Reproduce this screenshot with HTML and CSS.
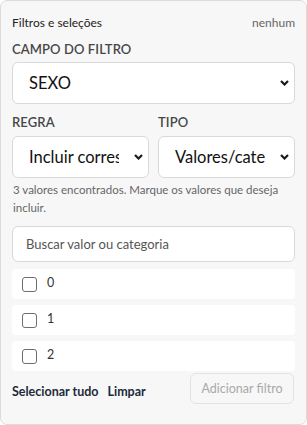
FILE: index.html
```html
<!DOCTYPE html>
<html lang="pt-BR">
<head>
<meta charset="utf-8">
<link rel="stylesheet" href="styles.css">
</head>
<body>
<div class="card">
  <div class="head">
    <span class="title">Filtros e seleções</span>
    <span class="status">nenhum</span>
  </div>
  <div class="field first">
    <div class="label">CAMPO DO FILTRO</div>
    <div class="select big"><span class="val">SEXO</span><svg class="chev" width="9" height="6" viewBox="0 0 9 6"><path d="M1 1 L4.5 4.5 L8 1" fill="none" stroke="#1a1a1a" stroke-width="2.2"/></svg></div>
  </div>
  <div class="row2">
    <div class="field">
      <div class="label">REGRA</div>
      <div class="select"><span class="val">Incluir correspondentes</span><svg class="chev" width="9" height="6" viewBox="0 0 9 6"><path d="M1 1 L4.5 4.5 L8 1" fill="none" stroke="#1a1a1a" stroke-width="2.2"/></svg></div>
    </div>
    <div class="field">
      <div class="label">TIPO</div>
      <div class="select"><span class="val">Valores/categorias</span><svg class="chev" width="9" height="6" viewBox="0 0 9 6"><path d="M1 1 L4.5 4.5 L8 1" fill="none" stroke="#1a1a1a" stroke-width="2.2"/></svg></div>
    </div>
  </div>
  <p class="hint">3 valores encontrados. Marque os valores que deseja incluir.</p>
  <div class="search">Buscar valor ou categoria</div>
  <div class="list">
    <div class="item"><span class="box"></span><span class="txt">0</span></div>
    <div class="item"><span class="box"></span><span class="txt">1</span></div>
    <div class="item"><span class="box"></span><span class="txt">2</span></div>
  </div>
  <div class="foot">
    <span class="link">Selecionar tudo</span>
    <span class="link">Limpar</span>
    <span class="btn">Adicionar filtro</span>
  </div>
</div>
</body>
</html>
```
FILE: styles.css
```css
html, body { margin: 0; padding: 0; }
body { font-family: "Lato", "Noto Sans", sans-serif; color: #222; background: #fff; }
.card {
  box-sizing: border-box;
  width: 307px; height: 425px;
  background: #f7f7f7;
  border: 1px solid #dcdcdc;
  border-radius: 7px;
  padding: 13px 11px 0 11px;
}
.head { display: flex; justify-content: space-between; align-items: center; height: 16px; font-size: 12px; }
.title { color: #222; }
.status { color: #666; }
.field { display: flex; flex-direction: column; min-width: 0; }
.label { font-size: 13px; font-weight: 600; color: #474747; letter-spacing: 0.1px; height: 18px; line-height: 18px; margin-top: 10px; margin-bottom: 4px; }
.select {
  box-sizing: border-box;
  display: flex; align-items: center;
  height: 42px;
  background: #fff;
  border: 1px solid #d9d9d9;
  border-radius: 6px;
  padding: 0 5px 0 16px;
  font-size: 16.5px; color: #111;
  min-width: 0;
}
.val { flex: 1; min-width: 0; overflow: hidden; white-space: nowrap; margin-right: 15px; }
.chev { flex: none; }
.row2 { display: grid; grid-template-columns: minmax(0, 1fr) minmax(0, 1fr); gap: 9px; }
.row2 .label { margin-top: 9px; margin-bottom: 5px; }
.hint { margin: 3px 0 0 1px; font-size: 11.5px; line-height: 18px; color: #666; }
.search {
  box-sizing: border-box;
  margin-top: 9px; height: 36px;
  background: #fff; border: 1px solid #d9d9d9; border-radius: 6px;
  padding: 0 13px; display: flex; align-items: center;
  font-size: 13px; color: #555;
}
.list { display: flex; flex-direction: column; gap: 6px; margin-top: 7px; }
.item { height: 30px; background: #fff; border-radius: 4px; display: flex; align-items: center; padding-left: 10px; }
.box { box-sizing: border-box; width: 15px; height: 15px; border: 1px solid #6e6e6e; border-radius: 3px; background: #fff; margin-top: 1px; }
.txt { margin-left: 10px; font-size: 12.5px; color: #333; margin-top: -4px; }
.foot { display: flex; align-items: center; margin-top: 2px; }
.link { font-size: 12.5px; font-weight: 700; color: #1c2b39; margin-right: 9px; margin-top: 6px; }
.btn {
  box-sizing: border-box; margin-left: auto; margin-right: 1px;
  height: 31px; width: 104px;
  border: 1px solid #e3e3e3; border-radius: 6px;
  display: flex; align-items: center; justify-content: center;
  font-size: 12.5px; color: #a9a9a9;
}
```
